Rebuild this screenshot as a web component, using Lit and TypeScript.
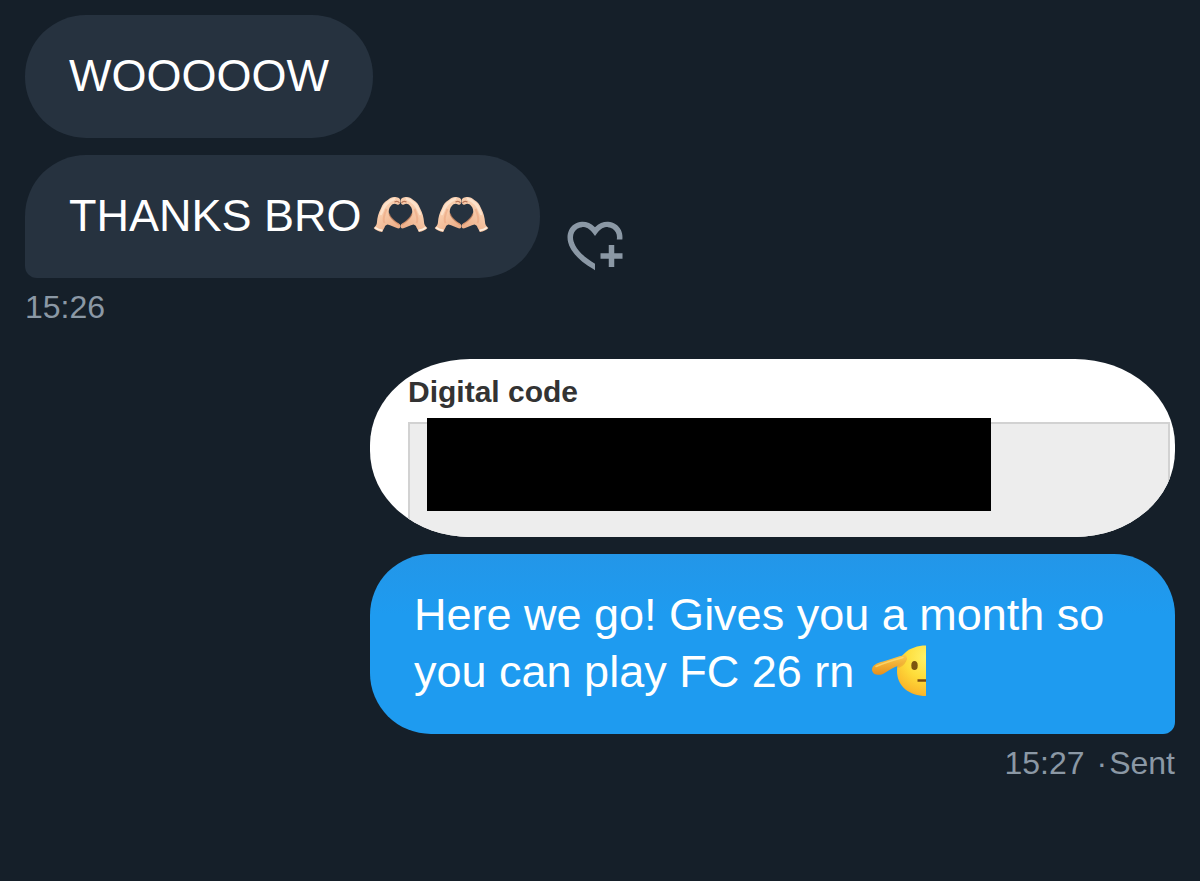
import { LitElement, html, svg, css } from "lit";
import { customElement } from "lit/decorators.js";

@customElement("heart-hands")
class HeartHands extends LitElement {
  static styles = css`
    :host { display: inline-block; width: 62px; height: 52px; margin-left: -1px; vertical-align: -10px; }
    svg { display: block; width: 100%; height: 100%; }
  `;

  private hand() {
    return svg`
      <path d="M0.700 39 C3 37 3.800 35.500 4 33 C4.200 29 5.500 24 8 19.300 C9.500 15.500 11.500 12.500 14.700 11 C17 8.700 19.500 7.700 22.500 8 C25.500 8.300 27.500 9.500 27.400 12.500 C27.300 15 26 16.200 24 15.500 C21.500 14 19.500 15 17.800 17 C16 19 15.300 21.500 16 25 C17 28.500 20 31 23 33 C25.500 34.500 27.400 35 27.400 37 C27.400 39 26.500 39.800 24.500 39.300 C21 38.300 18 36 14.500 35.500 C13 36 12 36.500 11.500 38.500 L9 43 C5.500 42.500 2.500 41 0.700 39 Z" fill="url(#skin)"/>
      <path d="M2 38.500 C4.500 40.500 7 41.300 9.500 41.500" fill="none" stroke="#fdeedd" stroke-width="2"/>
      <path d="M16 24.500 C17 29 20 31.500 26 35.500" fill="none" stroke="#d18a62" stroke-width="1.200" opacity="0.700"/>
      <path d="M11.500 34 C9.500 31 11 26 13.500 20" fill="none" stroke="#e9a079" stroke-width="2" opacity="0.500"/>
      <path d="M8 25 C10 18 14 12.500 21 10" fill="none" stroke="#ffe9d6" stroke-width="2.500" stroke-linecap="round" opacity="0.700"/>
      <path d="M21.500 13 C23.500 12 25.500 12.500 26.500 14" fill="none" stroke="#b8765a" stroke-width="1.200"/>
    `;
  }

  render() {
    return html`
      <svg viewBox="0 0 62 52" role="img" aria-label="Heart hands">
        <defs>
          <linearGradient id="skin" x1="0" y1="0" x2="0.6" y2="1">
            <stop offset="0" stop-color="#fbdcc3" />
            <stop offset="0.5" stop-color="#f8cbaa" />
            <stop offset="1" stop-color="#eeb08a" />
          </linearGradient>
        </defs>
        <g>${this.hand()}</g>
        <g transform="translate(55 0) scale(-1 1)">${this.hand()}</g>
      </svg>
    `;
  }
}

@customElement("salute-face")
class SaluteFace extends LitElement {
  static styles = css`
    :host { display: inline-block; width: 62px; height: 52px; vertical-align: -10px; }
    svg { display: block; width: 100%; height: 100%; }
  `;

  render() {
    return html`
      <svg viewBox="0 0 62 52" role="img" aria-label="Saluting face">
        <defs>
          <radialGradient id="face" gradientUnits="userSpaceOnUse" cx="60" cy="12" r="44">
            <stop offset="0" stop-color="#fff36a" />
            <stop offset="0.5" stop-color="#fedc3a" />
            <stop offset="0.85" stop-color="#fbb92b" />
            <stop offset="1" stop-color="#ee9a22" />
          </radialGradient>
          <linearGradient id="palm" x1="0" y1="0" x2="0" y2="1">
            <stop offset="0" stop-color="#fbcb4c" />
            <stop offset="1" stop-color="#e58f1c" />
          </linearGradient>
        </defs>
        <path d="M59 0.500 C42 0.500 30 11 30 26 C30 41 42 51 59 51 Z" fill="url(#face)" />
        <ellipse cx="47.500" cy="20.500" rx="3.200" ry="4.600" fill="#7d540f" />
        <path d="M50.500 35.500 H59" stroke="#7a4a12" stroke-width="2.500" />
        <path d="M38.500 13 C38 17 35 20 31 21.500" stroke="#e08a35" stroke-width="3" fill="none" opacity="0.400" />
        <path d="M38.500 10 C30 11.500 24 14 16 16.500 C10 18 5 20 5 25 C5.500 29.500 11 31 16 29 C20 27 23 24 28 22 C33 20.500 37 18.500 39 15 C40 13 40 11 38.500 10 Z" fill="url(#palm)" />
        <path d="M9 21.500 C17 18 27 15 36 12.500" stroke="#fee07a" stroke-width="1.500" fill="none" stroke-linecap="round" opacity="0.700" />
      </svg>
    `;
  }
}

@customElement("app-root")
class AppRoot extends LitElement {
  static styles = css`
    :host {
      display: block;
      box-sizing: border-box;
      min-height: 100vh;
      padding: 15px 25px 24px;
      background: #151f29;
      color: #fff;
      font-family: "Liberation Sans", Arial, sans-serif;
      font-size: 45px;
      line-height: 57px;
    }
    .thread { display: flex; flex-direction: column; gap: 34px; }
    .group { display: flex; flex-direction: column; align-items: flex-start; gap: 17px; }
    .group.sent { align-items: flex-end; }
    .stack { display: flex; flex-direction: column; gap: 11px; max-width: 100%; }
    .sent .stack { width: 70%; }
    .row { display: flex; align-items: flex-end; gap: 22px; }
    .bubble {
      box-sizing: border-box;
      margin: 0;
      padding: 32px 44px 34px;
      border-radius: 61px;
      background: #26323f;
    }
    .bubble.tail-left { border-bottom-left-radius: 12px; }
    .bubble.tail-right {
      border-bottom-right-radius: 12px;
      background: linear-gradient(#2396e8, #1e9bf0 60px);
    }
    .react {
      display: block;
      flex: none;
      width: 66px;
      height: 66px;
      padding: 0;
      border: 0;
      background: none;
      color: #8b98a5;
      cursor: pointer;
    }
    .react svg { display: block; width: 100%; height: 100%; fill: currentColor; }
    .meta {
      display: flex;
      margin: 0;
      color: #8b98a5;
      font-size: 32px;
      line-height: 36px;
    }
    .sent .meta { justify-content: flex-end; gap: 12px; }
    .status { display: flex; gap: 2px; }
    .attachment {
      position: relative;
      box-sizing: border-box;
      width: 70%;
      height: 178px;
      margin: 0;
      padding: 15px 5px 0 38px;
      overflow: hidden;
      border-radius: 100px / 86px;
      background: #fff;
    }
    .label {
      display: block;
      height: 48px;
      color: #333;
      font-size: 30px;
      font-weight: bold;
      line-height: 36px;
    }
    .code {
      display: block;
      box-sizing: border-box;
      width: 100%;
      height: 140px;
      border: 2px solid #d2d2d2;
      border-radius: 0;
      background: #ededed;
      outline: none;
    }
    .redaction {
      position: absolute;
      top: 59px;
      left: 57px;
      width: 70%;
      height: 93px;
      background: #000;
    }
  `;

  render() {
    return html`
      <main class="thread">
        <section class="group">
          <p class="bubble">WOOOOOW</p>
          <div class="stack">
            <div class="row">
              <p class="bubble tail-left">THANKS BRO <heart-hands></heart-hands><heart-hands></heart-hands></p>
              <button class="react" type="button" aria-label="Add reaction">
                <svg viewBox="0 0 24 24" aria-hidden="true">
                  <path d="M17 12v3h-2.998v2h3v3h2v-3h3v-2h-3v-3H17zm-5 6.839c-3.871-2.34-6.053-4.639-7.127-6.609-1.112-2.04-1.031-3.7-.479-4.82.561-1.13 1.667-1.84 2.91-1.91 1.222-.06 2.68.51 3.892 2.16l.806 1.09.805-1.09c1.211-1.65 2.668-2.22 3.89-2.16 1.242.07 2.347.78 2.908 1.91.334.677.49 1.554.321 2.59h2.011c.153-1.283-.039-2.469-.539-3.48-.887-1.79-2.647-2.91-4.601-3.01-1.65-.09-3.367.56-4.796 2.01-1.43-1.45-3.147-2.1-4.798-2.01-1.954.1-3.714 1.22-4.601 3.01-.896 1.81-.846 4.17.514 6.67 1.353 2.48 4.003 5.12 8.382 7.67l.502.299v-2.32z" />
                </svg>
              </button>
            </div>
            <p class="meta"><time>15:26</time></p>
          </div>
        </section>
        <section class="group sent">
          <figure class="attachment">
            <label class="label" for="code">Digital code</label>
            <input class="code" id="code" type="text" readonly />
            <span class="redaction"></span>
          </figure>
          <div class="stack">
            <p class="bubble tail-right">Here we go! Gives you a month so you can play FC 26 rn <salute-face></salute-face></p>
            <p class="meta"><time>15:27</time><span class="status"><span>·</span><span>Sent</span></span></p>
          </div>
        </section>
      </main>
    `;
  }
}
